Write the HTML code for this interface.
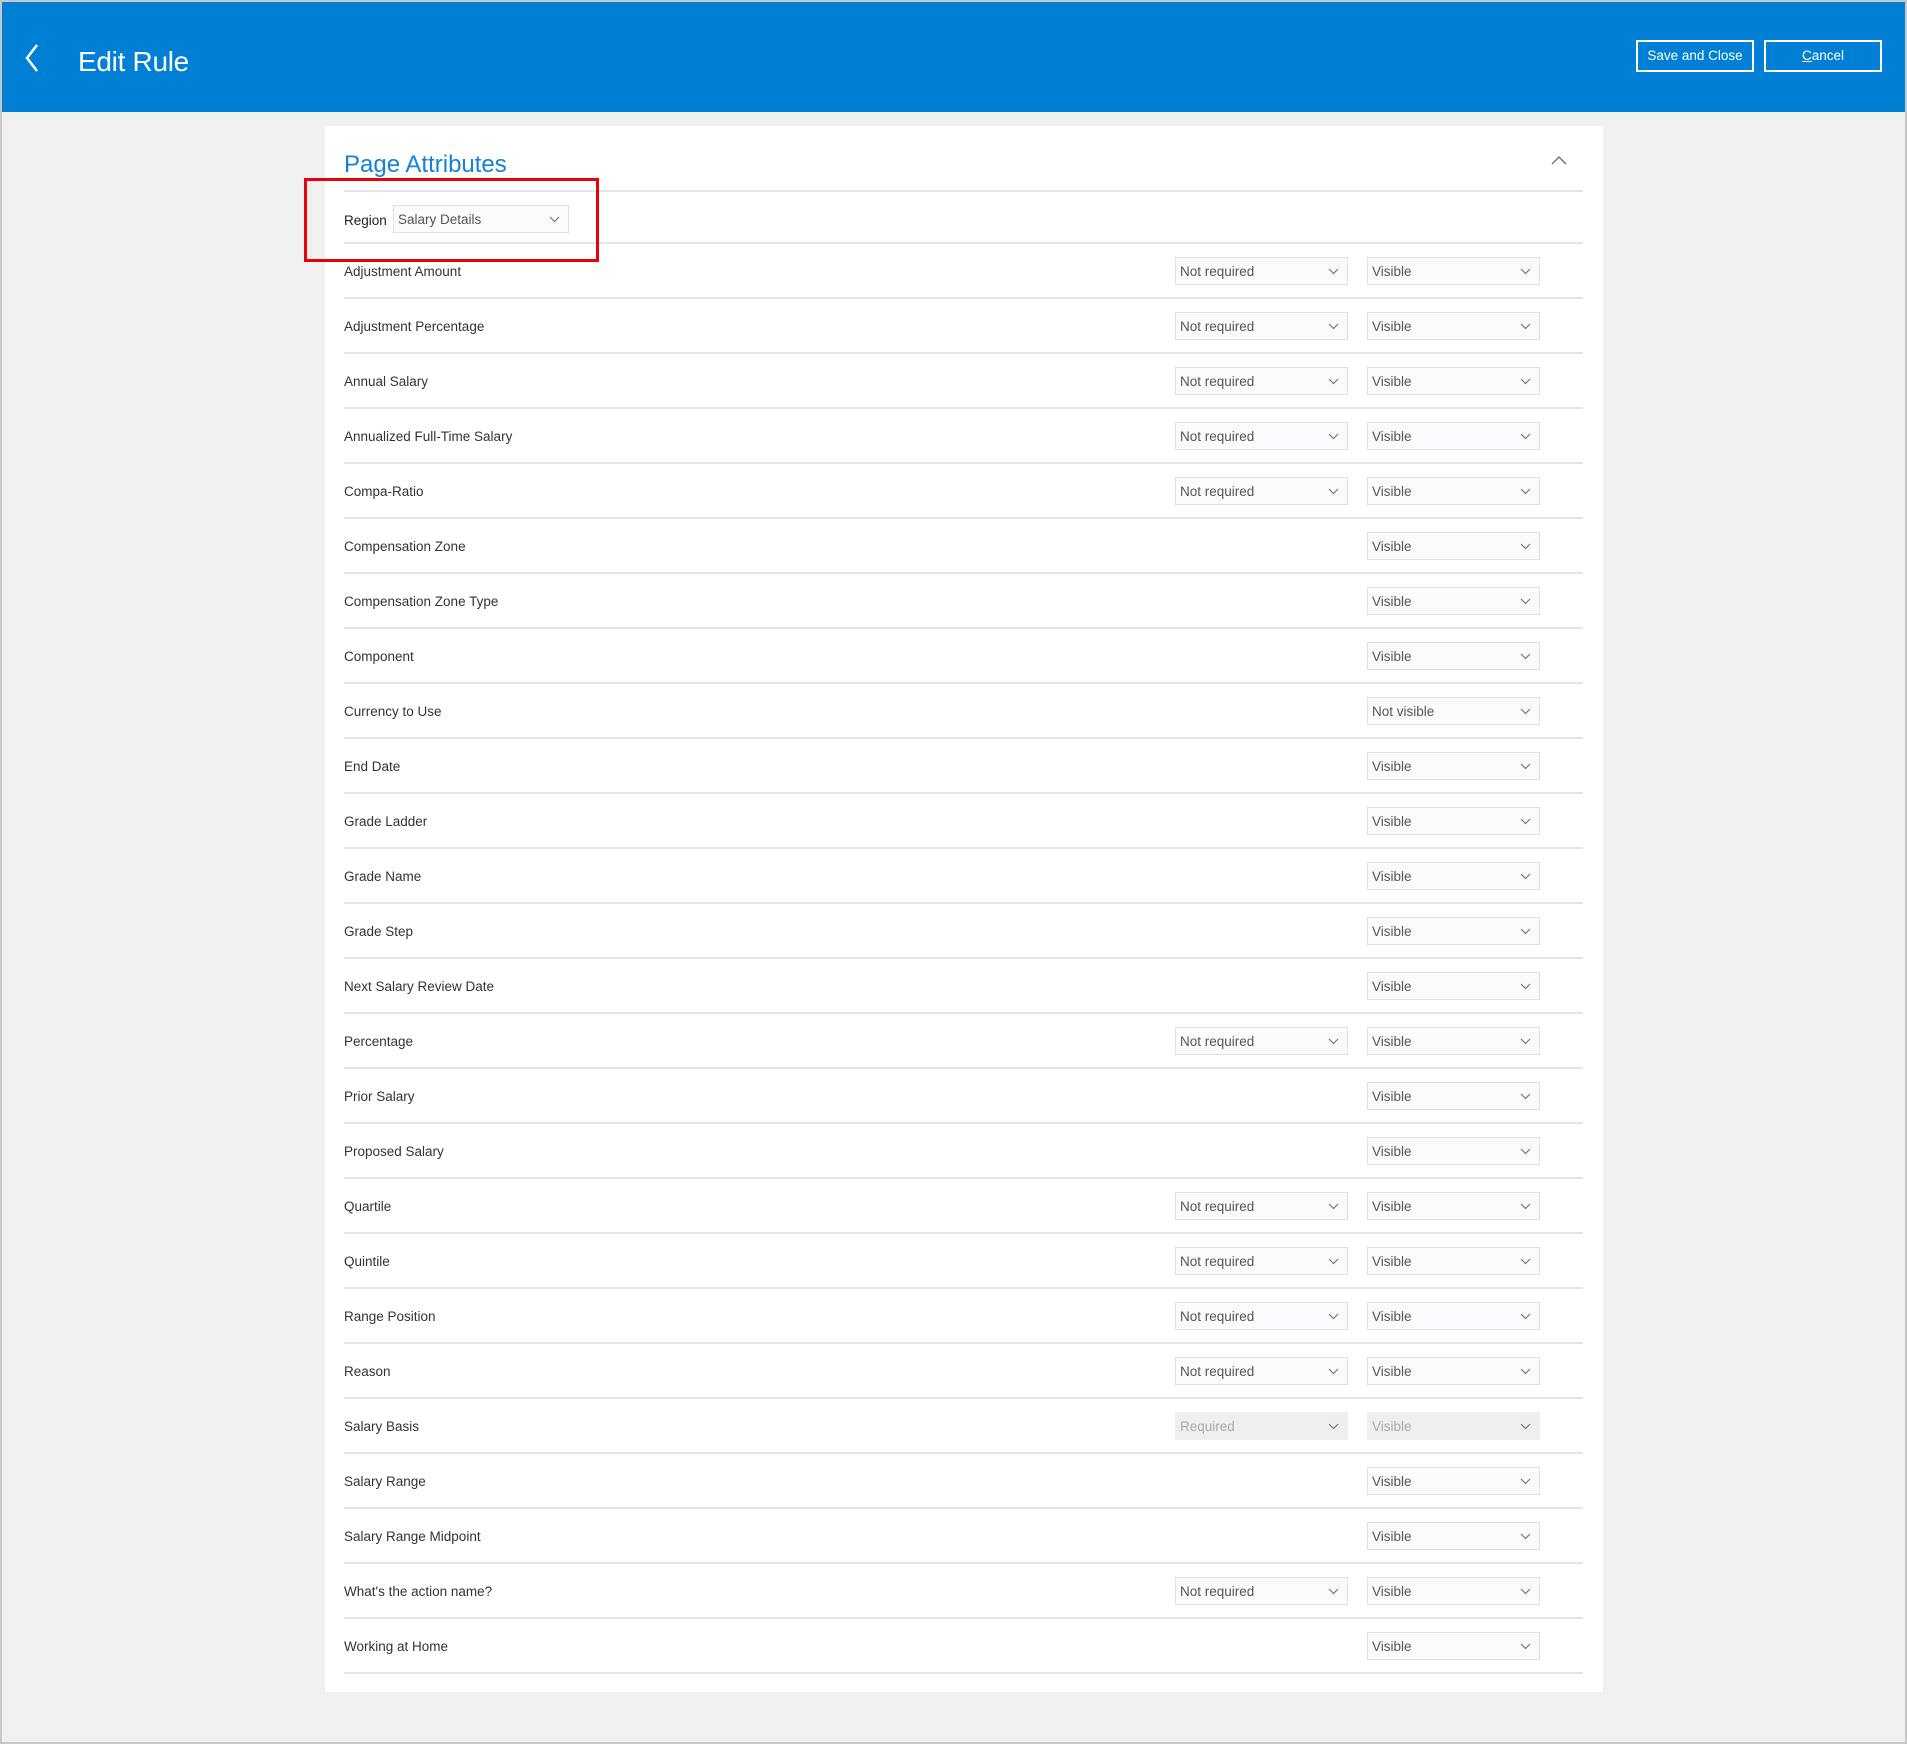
<!DOCTYPE html>
<html><head><meta charset="utf-8"><style>
*{box-sizing:border-box;margin:0;padding:0}
body{width:1907px;height:1744px;background:#c8c8c8;font-family:"Liberation Sans",sans-serif;position:relative;overflow:hidden}
#frame{position:absolute;left:2px;top:2px;width:1903px;height:1740px;background:#f0f0f0}
#hdr{position:absolute;left:2px;top:2px;width:1903px;height:110px;background:#0080d4}
.t{position:absolute;left:76px;top:44px;font-size:28px;color:#fff;letter-spacing:-0.3px}
.btn{position:absolute;top:40px;height:32px;width:118px;border:2px solid #fff;color:#fff;font-size:13.5px;text-align:center;line-height:28px}
#card{position:absolute;left:325px;top:126px;width:1278px;height:1566px;background:#fff}
.pa{position:absolute;left:344px;top:151px;font-size:24px;color:#1482d8}
.hl{position:absolute;left:344px;width:1239px;height:2px;background:#e2e5e9}
.lab{position:absolute;left:344px;font-size:13.5px;color:#333}
.sel{position:absolute;height:28px;background:#f9fbfd;border:1px solid #dde1e6;font-size:13.5px;color:#555;padding-left:4px;line-height:27px}
.sel.dis{background:#efeff1;border-color:#efeff1;color:#aaa}
.sel svg{position:absolute;right:8px;top:10px}
#red{position:absolute;left:304px;top:178px;width:295px;height:84px;border:3px solid #e8000b}
</style></head><body>
<div id="frame"></div>
<div id="hdr">
<svg style="position:absolute;left:22px;top:42px" width="16" height="28" viewBox="0 0 16 28"><path d="M13 1 L3 14 L13 27" fill="none" stroke="#fff" stroke-width="2.5"/></svg>
<div class="t">Edit Rule</div>
<div class="btn" style="left:1634px;top:38px">Save and Close</div>
<div class="btn" style="left:1762px;top:38px"><u>C</u>ancel</div>
</div>
<div id="card"></div>
<div class="pa">Page Attributes</div>
<svg style="position:absolute;left:1551px;top:155px" width="16" height="10" viewBox="0 0 16 10"><path d="M1 9 L8 2 L15 9" fill="none" stroke="#777" stroke-width="1.5"/></svg>
<div class="hl" style="top:190px"></div>
<div class="lab" style="top:213px;color:#222">Region</div>
<div class="sel" style="left:393px;top:205px;width:176px">Salary Details<svg width="11" height="7" viewBox="0 0 11 7"><path d="M1 1 L5.5 5.5 L10 1" fill="none" stroke="#777" stroke-width="1.2"/></svg></div>
<div class="hl" style="top:242px"></div>
<div id="red"></div>
<div id="rows"></div>
<script>
var rows=[["Adjustment Amount",1,"Visible"],["Adjustment Percentage",1,"Visible"],["Annual Salary",1,"Visible"],["Annualized Full-Time Salary",1,"Visible"],["Compa-Ratio",1,"Visible"],["Compensation Zone",0,"Visible"],["Compensation Zone Type",0,"Visible"],["Component",0,"Visible"],["Currency to Use",0,"Not visible"],["End Date",0,"Visible"],["Grade Ladder",0,"Visible"],["Grade Name",0,"Visible"],["Grade Step",0,"Visible"],["Next Salary Review Date",0,"Visible"],["Percentage",1,"Visible"],["Prior Salary",0,"Visible"],["Proposed Salary",0,"Visible"],["Quartile",1,"Visible"],["Quintile",1,"Visible"],["Range Position",1,"Visible"],["Reason",1,"Visible"],["Salary Basis",2,"Visible"],["Salary Range",0,"Visible"],["Salary Range Midpoint",0,"Visible"],["What's the action name?",1,"Visible"],["Working at Home",0,"Visible"]];
var chev='<svg width="11" height="7" viewBox="0 0 11 7"><path d="M1 1 L5.5 5.5 L10 1" fill="none" stroke="#777" stroke-width="1.2"/></svg>';
var h='';
rows.forEach(function(r,i){var y=244+i*55;
h+='<div class="lab" style="top:'+(y+20)+'px">'+r[0].replace("'","&#39;")+'</div>';
var d=r[1]==2?' dis':'';
if(r[1])h+='<div class="sel'+d+'" style="left:1175px;top:'+(y+13)+'px;width:173px">'+(r[1]==2?'Required':'Not required')+chev+'</div>';
h+='<div class="sel'+d+'" style="left:1367px;top:'+(y+13)+'px;width:173px">'+r[2]+chev+'</div>';
h+='<div class="hl" style="top:'+(y+53)+'px"></div>';});
document.getElementById('rows').innerHTML=h;
</script>
</body></html>
